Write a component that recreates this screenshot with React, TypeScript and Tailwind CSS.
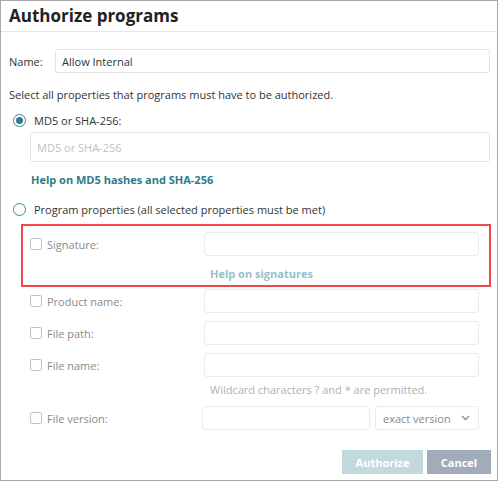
import React from "react";

const font = { fontFamily: '"Open Sans", "Noto Sans", sans-serif' };

function Checkbox() {
  return <span className="inline-block h-[12px] w-[12px] rounded-[2px] border border-[#c4c4c4] bg-white" />;
}

function Radio({ checked }: { checked?: boolean }) {
  return (
    <span className="flex h-[13px] w-[13px] items-center justify-center rounded-full border border-[#3a8796] bg-white">
      {checked && <span className="h-[7px] w-[7px] rounded-full bg-[#2f7d8d]" />}
    </span>
  );
}

function PropRow({ label, mt }: { label: string; mt: string }) {
  return (
    <div className={`flex items-center ${mt}`}>
      <div className="flex w-[195px] items-center gap-[5px] pl-[21px]">
        <Checkbox />
        <span className="text-[#8a8a8a]">{label}</span>
      </div>
      <div className="h-[24px] w-[275px] rounded-[3px] border border-[#ebebeb] bg-white" />
    </div>
  );
}

export default function App() {
  return (
    <div className="h-[482px] w-[499px] bg-white">
      <div
        className="flex h-[481px] w-[498px] flex-col border border-[#a9a9a9] text-[11px] leading-[17px] text-[#333]"
        style={font}
      >
        <div className="h-[31px] border-b border-[#e6e6e6] pl-[8px] pt-[3px] text-[17px] font-bold leading-[24px] text-[#222]">
          Authorize programs
        </div>
        <div className="flex flex-col pl-[8px]">
          <div className="mt-[17px] flex items-center">
            <span className="w-[46px]">Name:</span>
            <div className="flex h-[24px] w-[435px] items-center rounded-[3px] border border-[#e3e3e3] pl-[6px]">
              Allow Internal
            </div>
          </div>
          <div className="mt-[13px]">Select all properties that programs must have to be authorized.</div>
          <div className="mt-[9px] flex items-center pl-[4px]">
            <Radio checked />
            <span className="ml-[8px]">MD5 or SHA-256:</span>
          </div>
          <div className="ml-[21px] mt-[3px] flex h-[30px] w-[460px] items-center rounded-[3px] border border-[#e6e6e6] pl-[6px] text-[#c2c2c2]">
            MD5 or SHA-256
          </div>
          <div className="ml-[22px] mt-[9px] font-bold text-[#2e7c8c]">Help on MD5 hashes and SHA-256</div>
          <div className="mt-[13px] flex items-center pl-[4px]">
            <Radio />
            <span className="ml-[8px]">Program properties (all selected properties must be met)</span>
          </div>
          <div className="ml-[12px] mt-[6px] w-[470px] border-2 border-[#f04848] pb-[3px] pt-[6px]">
            <div className="flex items-center">
              <div className="flex w-[181px] items-center gap-[5px] pl-[7px]">
                <Checkbox />
                <span className="text-[#8a8a8a]">Signature:</span>
              </div>
              <div className="h-[24px] w-[275px] rounded-[3px] border border-[#ebebeb] bg-white" />
            </div>
            <div className="ml-[187px] mt-[9px] font-bold text-[#94bfc8]">Help on signatures</div>
          </div>
          <PropRow label="Product name:" mt="mt-[2px]" />
          <PropRow label="File path:" mt="mt-[8px]" />
          <PropRow label="File name:" mt="mt-[8px]" />
          <div className="ml-[201px] mt-[4px] text-[#b0b0b0]">Wildcard characters ? and * are permitted.</div>
          <div className="mt-[8px] flex items-center">
            <div className="flex w-[193px] items-center gap-[5px] pl-[21px]">
              <Checkbox />
              <span className="text-[#8a8a8a]">File version:</span>
            </div>
            <div className="h-[24px] w-[168px] rounded-[3px] border border-[#ebebeb] bg-white" />
            <div className="ml-[5px] flex h-[24px] w-[104px] items-center justify-between rounded-[3px] border border-[#ebebeb] pl-[7px] pr-[8px] text-[#8a8a8a]">
              <span>exact version</span>
              <svg width="9" height="6" viewBox="0 0 9 6" fill="none" stroke="#8a8a8a" strokeWidth="1.3">
                <path d="M1 1l3.5 3.5L8 1" />
              </svg>
            </div>
          </div>
          <div className="mt-[20px] flex justify-end gap-[4px] pr-[6px]">
            <div className="flex h-[24px] w-[81px] items-center justify-center bg-[#c2d9de] font-bold text-white">Authorize</div>
            <div className="flex h-[24px] w-[64px] items-center justify-center bg-[#a2abba] font-bold text-white">Cancel</div>
          </div>
        </div>
      </div>
    </div>
  );
}
